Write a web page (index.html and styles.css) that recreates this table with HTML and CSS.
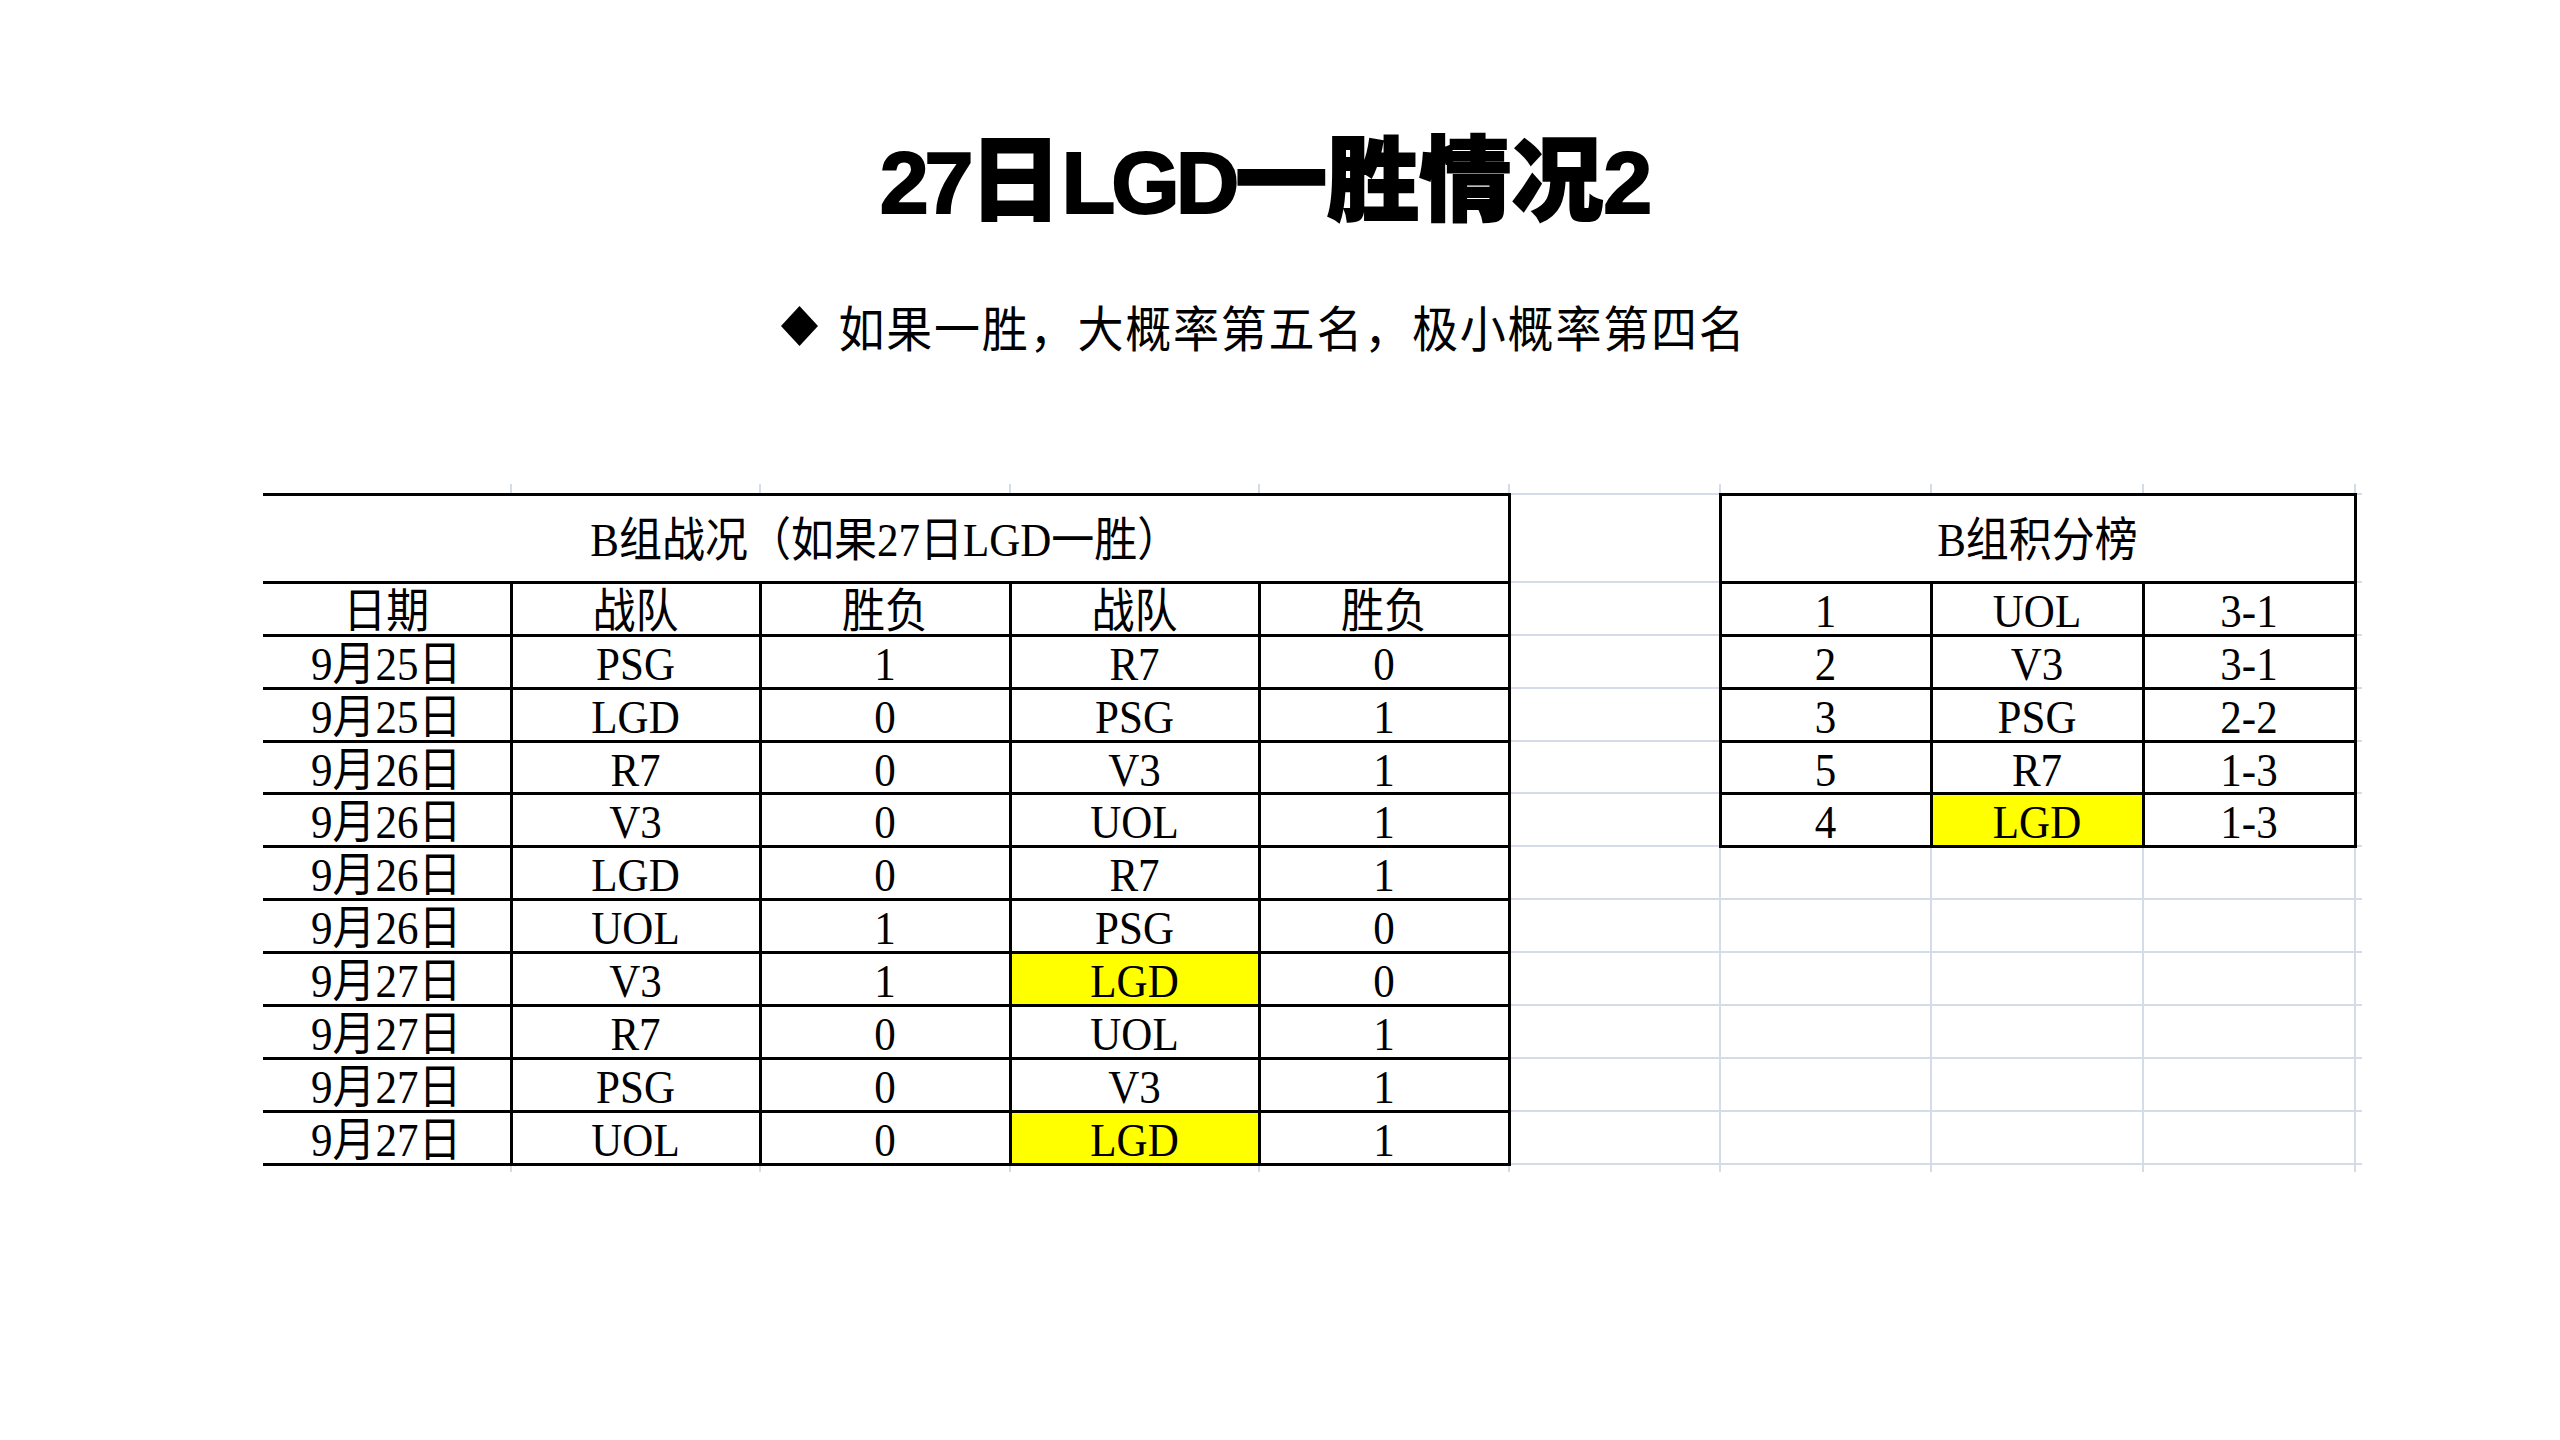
FILE: index.html
```html
<!DOCTYPE html>
<html lang="zh-CN">
<head>
<meta charset="utf-8">
<title>27日LGD一胜情况2</title>
<link rel="stylesheet" href="styles.css">
</head>
<body>
<div class="slide">
  <h1 class="heading"><span class="lat">27</span>日<span class="lat">LGD</span>一胜情况<span class="lat">2</span></h1>
  <div class="subtitle">
    <svg class="bullet" viewBox="0 0 37 40" aria-hidden="true"><polygon points="18.5,0 37,20 18.5,40 0,20" fill="#000"/></svg>
    <span class="text">如果一胜，大概率第五名，极小概率第四名</span>
  </div>
  <table class="sheet">
    <colgroup>
      <col class="w248"><col class="w249"><col class="w250"><col class="w249"><col class="w250">
      <col class="w211"><col class="w211"><col class="w212"><col class="w212"><col class="w7">
    </colgroup>
    <tr class="stub-top"><td></td><td></td><td></td><td></td><td></td><td></td><td></td><td></td><td></td><td class="trail"></td></tr>
    <tr class="title-row">
      <td class="b" colspan="5"><span class="t">B组战况（如果27日LGD一胜）</span></td>
      <td></td>
      <td class="b" colspan="3"><span class="t">B组积分榜</span></td>
      <td class="trail"></td>
    </tr>
    <tr class="r">
      <td class="b"><span class="t">日期</span></td><td class="b"><span class="t">战队</span></td><td class="b"><span class="t">胜负</span></td><td class="b"><span class="t">战队</span></td><td class="b"><span class="t">胜负</span></td>
      <td></td>
      <td class="b"><span class="t">1</span></td><td class="b"><span class="t">UOL</span></td><td class="b"><span class="t">3-1</span></td>
      <td class="trail"></td>
    </tr>
    <tr class="r">
      <td class="b"><span class="t">9月25日</span></td><td class="b"><span class="t">PSG</span></td><td class="b"><span class="t">1</span></td><td class="b"><span class="t">R7</span></td><td class="b"><span class="t">0</span></td>
      <td></td>
      <td class="b"><span class="t">2</span></td><td class="b"><span class="t">V3</span></td><td class="b"><span class="t">3-1</span></td>
      <td class="trail"></td>
    </tr>
    <tr class="r">
      <td class="b"><span class="t">9月25日</span></td><td class="b"><span class="t">LGD</span></td><td class="b"><span class="t">0</span></td><td class="b"><span class="t">PSG</span></td><td class="b"><span class="t">1</span></td>
      <td></td>
      <td class="b"><span class="t">3</span></td><td class="b"><span class="t">PSG</span></td><td class="b"><span class="t">2-2</span></td>
      <td class="trail"></td>
    </tr>
    <tr class="r short">
      <td class="b"><span class="t">9月26日</span></td><td class="b"><span class="t">R7</span></td><td class="b"><span class="t">0</span></td><td class="b"><span class="t">V3</span></td><td class="b"><span class="t">1</span></td>
      <td></td>
      <td class="b"><span class="t">5</span></td><td class="b"><span class="t">R7</span></td><td class="b"><span class="t">1-3</span></td>
      <td class="trail"></td>
    </tr>
    <tr class="r">
      <td class="b"><span class="t">9月26日</span></td><td class="b"><span class="t">V3</span></td><td class="b"><span class="t">0</span></td><td class="b"><span class="t">UOL</span></td><td class="b"><span class="t">1</span></td>
      <td></td>
      <td class="b"><span class="t">4</span></td><td class="b hl"><span class="t">LGD</span></td><td class="b"><span class="t">1-3</span></td>
      <td class="trail"></td>
    </tr>
    <tr class="r">
      <td class="b"><span class="t">9月26日</span></td><td class="b"><span class="t">LGD</span></td><td class="b"><span class="t">0</span></td><td class="b"><span class="t">R7</span></td><td class="b"><span class="t">1</span></td>
      <td></td><td></td><td></td><td></td><td class="trail"></td>
    </tr>
    <tr class="r">
      <td class="b"><span class="t">9月26日</span></td><td class="b"><span class="t">UOL</span></td><td class="b"><span class="t">1</span></td><td class="b"><span class="t">PSG</span></td><td class="b"><span class="t">0</span></td>
      <td></td><td></td><td></td><td></td><td class="trail"></td>
    </tr>
    <tr class="r">
      <td class="b"><span class="t">9月27日</span></td><td class="b"><span class="t">V3</span></td><td class="b"><span class="t">1</span></td><td class="b hl"><span class="t">LGD</span></td><td class="b"><span class="t">0</span></td>
      <td></td><td></td><td></td><td></td><td class="trail"></td>
    </tr>
    <tr class="r">
      <td class="b"><span class="t">9月27日</span></td><td class="b"><span class="t">R7</span></td><td class="b"><span class="t">0</span></td><td class="b"><span class="t">UOL</span></td><td class="b"><span class="t">1</span></td>
      <td></td><td></td><td></td><td></td><td class="trail"></td>
    </tr>
    <tr class="r">
      <td class="b"><span class="t">9月27日</span></td><td class="b"><span class="t">PSG</span></td><td class="b"><span class="t">0</span></td><td class="b"><span class="t">V3</span></td><td class="b"><span class="t">1</span></td>
      <td></td><td></td><td></td><td></td><td class="trail"></td>
    </tr>
    <tr class="r">
      <td class="b"><span class="t">9月27日</span></td><td class="b"><span class="t">UOL</span></td><td class="b"><span class="t">0</span></td><td class="b hl"><span class="t">LGD</span></td><td class="b"><span class="t">1</span></td>
      <td></td><td></td><td></td><td></td><td class="trail"></td>
    </tr>
    <tr class="stub-bot"><td></td><td></td><td></td><td></td><td></td><td></td><td></td><td></td><td></td><td class="trail"></td></tr>
  </table>
</div>
</body>
</html>
```

FILE: styles.css
```css
html, body {
  margin: 0;
  padding: 0;
  background: #ffffff;
}

body {
  width: 2560px;
  height: 1440px;
  overflow: hidden;
  color: #000;
}

.slide {
  padding-top: 127px;
}

.heading {
  margin: 0;
  padding-right: 32px;
  text-align: center;
  font-family: "Noto Sans CJK SC", sans-serif;
  font-weight: 900;
  font-size: 92px;
  line-height: 1;
  color: #000;
  -webkit-text-stroke: 2px #000;
}

.heading .lat {
  font-family: "Liberation Sans", Arial, sans-serif;
  font-weight: 700;
  font-size: 88px;
  letter-spacing: -4px;
}

.subtitle {
  margin-top: 76px;
  padding-right: 32px;
  height: 46px;
  display: flex;
  justify-content: center;
  align-items: center;
  gap: 20px;
}

.subtitle .bullet {
  display: block;
  width: 37px;
  height: 40px;
}

.subtitle .text {
  display: inline-block;
  font-family: "Noto Sans CJK SC", sans-serif;
  font-size: 46px;
  line-height: 46px;
  letter-spacing: 1.8px;
  color: #000;
  transform: scaleY(1.06);
}

.sheet {
  margin: 135px 0 0 263px;
  border-collapse: collapse;
  table-layout: fixed;
  width: 2099px;
  font-family: "Liberation Serif", "Noto Sans CJK SC", serif;
  font-size: 43px;
  color: #000;
}

.sheet .w248 { width: 248px; }
.sheet .w249 { width: 249px; }
.sheet .w250 { width: 250px; }
.sheet .w211 { width: 211px; }
.sheet .w212 { width: 212px; }
.sheet .w7 { width: 7px; }

.sheet td {
  border: 2px solid #d5dbe7;
  padding: 0;
  text-align: center;
  vertical-align: middle;
  line-height: 1;
  white-space: nowrap;
}

.sheet td.b {
  border: 3px solid #000;
}

.sheet td.hl {
  background: #ffff00;
}

.sheet tr.stub-top { height: 10px; }
.sheet tr.stub-top td { border-top: none; }

.sheet tr.stub-bot { height: 8px; }
.sheet tr.stub-bot td { border-bottom: none; }

.sheet tr.title-row { height: 88px; }
.sheet tr.title-row td { padding-top: 4px; }

.sheet tr.r { height: 53px; }
.sheet tr.r.short { height: 52px; }
.sheet tr.r td { padding-top: 6px; }

.sheet td:first-child { border-left: none; }
.sheet td.trail { border-right: none; }

.sheet .t {
  display: inline-block;
  transform: scaleY(1.08);
}
```
